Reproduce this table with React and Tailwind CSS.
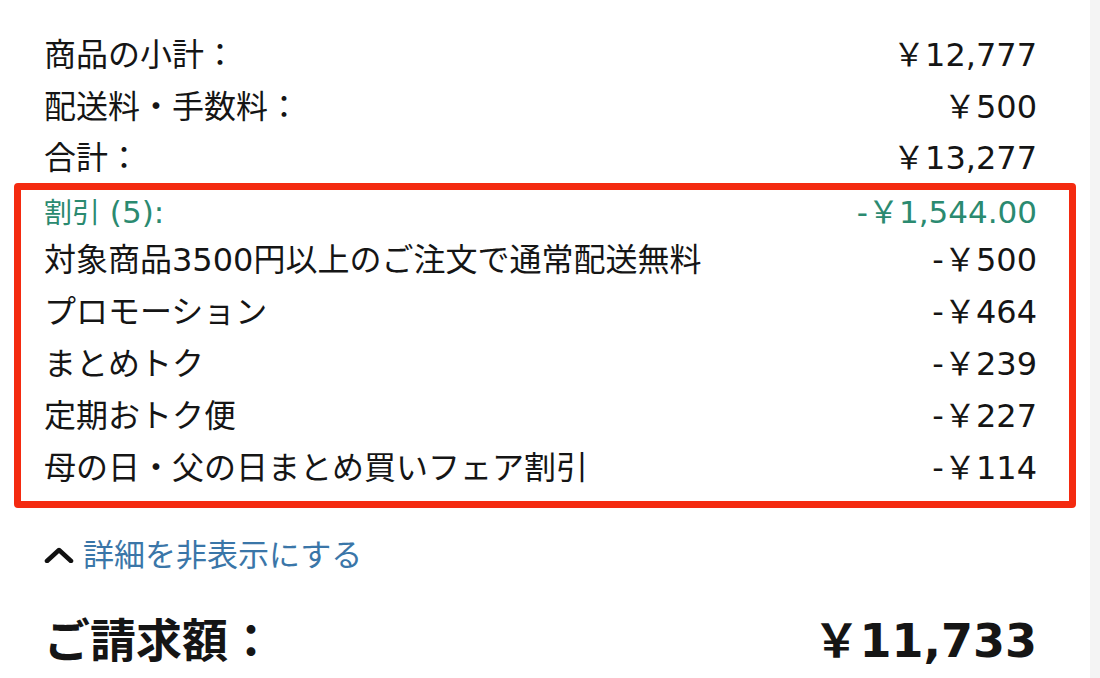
import React from "react";

const font = { fontFamily: '"DejaVu Sans", "Noto Sans CJK JP", sans-serif' };

function Row({ label, value, className = "" }) {
  return (
    <div className={"flex items-center justify-between " + className}>
      <span>{label}</span>
      <span>{value}</span>
    </div>
  );
}

export default function App() {
  return (
    <div className="w-[1100px] h-[678px] flex bg-white overflow-hidden text-[#151515]" style={font}>
      <div className="w-[1090px] pl-[44px] pr-[53px] pt-[29px] flex flex-col">
        <div className="flex flex-col text-[32px] leading-none">
          <Row label="商品の小計：" value="￥12,777" className="h-[52px]" />
          <Row label="配送料・手数料：" value="￥500" className="h-[52px]" />
          <Row label="合計：" value="￥13,277" className="h-[50px]" />
        </div>
        <div className="ml-[-30px] mr-[-39px] border-[7px] border-[#f42a10] rounded-[4px] pl-[23px] pr-[32px] pb-[7px] flex flex-col text-[32px] leading-none">
          <div className="h-[44px] flex items-center justify-between text-[31px] text-[#2b8a70]">
            <span>
              <span className="text-[28px]">割引</span> (5):
            </span>
            <span>-￥1,544.00</span>
          </div>
          <Row label="対象商品3500円以上のご注文で通常配送無料" value="-￥500" className="h-[52px]" />
          <Row label="プロモーション" value="-￥464" className="h-[52px]" />
          <Row label="まとめトク" value="-￥239" className="h-[52px]" />
          <Row label="定期おトク便" value="-￥227" className="h-[52px]" />
          <Row label="母の日・父の日まとめ買いフェア割引" value="-￥114" className="h-[52px]" />
        </div>
        <div className="mt-[21px] h-[52px] flex items-center gap-[9px]">
          <svg width="30" height="16" viewBox="0 0 30 16" className="shrink-0">
            <path d="M3 14 L15 3 L27 14" fill="none" stroke="#111111" strokeWidth="4.5" strokeLinecap="round" strokeLinejoin="round" />
          </svg>
          <span className="text-[31px] leading-none text-[#3a76a8]">詳細を非表示にする</span>
        </div>
        <div className="mt-[30px] h-[60px] flex items-center justify-between font-bold text-[46px] leading-none">
          <span>ご請求額：</span>
          <span>￥11,733</span>
        </div>
      </div>
      <div className="w-[10px] h-full bg-[#f4f4f4]" />
    </div>
  );
}
